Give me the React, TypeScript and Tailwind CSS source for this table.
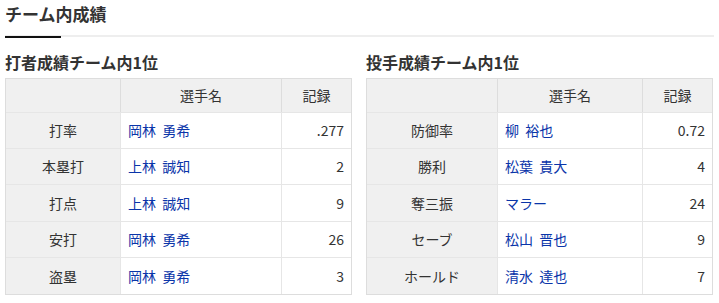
import React from "react";

type Row = { label: string; name: string; value: string };

const batting: Row[] = [
  { label: "打率", name: "岡林 勇希", value: ".277" },
  { label: "本塁打", name: "上林 誠知", value: "2" },
  { label: "打点", name: "上林 誠知", value: "9" },
  { label: "安打", name: "岡林 勇希", value: "26" },
  { label: "盗塁", name: "岡林 勇希", value: "3" },
];

const pitching: Row[] = [
  { label: "防御率", name: "柳 裕也", value: "0.72" },
  { label: "勝利", name: "松葉 貴大", value: "4" },
  { label: "奪三振", name: "マラー", value: "24" },
  { label: "セーブ", name: "松山 晋也", value: "9" },
  { label: "ホールド", name: "清水 達也", value: "7" },
];

const rowHeights = ["h-[36px]", "h-[36px]", "h-[37px]", "h-[36px]", "h-[37px]"];

function StatTable({
  title,
  rows,
  c1,
  c2,
}: {
  title: string;
  rows: Row[];
  c1: string;
  c2: string;
}) {
  return (
    <div className="flex flex-col">
      <h3 className="h-[20px] text-[16px] leading-[20px] font-bold text-[#333333]">{title}</h3>
      <div className="mt-[6px] border border-[#dddddd] text-[14px] text-[#333333]">
        <div className="flex h-[33px] bg-[#f0f0f0]">
          <div className={`${c1} shrink-0`} />
          <div className={`${c2} shrink-0 border-l border-[#dddddd] flex items-center justify-center`}>
            選手名
          </div>
          <div className="flex-1 border-l border-[#dddddd] flex items-center justify-center">記録</div>
        </div>
        {rows.map((r, i) => (
          <div key={r.label} className={`flex ${rowHeights[i]} border-t border-[#e6e6e6]`}>
            <div className={`${c1} shrink-0 bg-[#f0f0f0] flex items-center justify-center`}>{r.label}</div>
            <div
              className={`${c2} shrink-0 border-l border-[#e6e6e6] bg-white flex items-center pl-[7px] text-[#0a35a9] [word-spacing:3px]`}
            >
              {r.name}
            </div>
            <div className="flex-1 border-l border-[#e6e6e6] bg-white flex items-center justify-end pr-[7px]">
              {r.value}
            </div>
          </div>
        ))}
      </div>
    </div>
  );
}

export default function App() {
  return (
    <div
      className="w-[719px] h-[303px] bg-white px-[5px]"
      style={{ fontFamily: '"Noto Sans CJK JP", "Noto Sans", sans-serif' }}
    >
      <h2 className="h-[28px] text-[17px] leading-[28px] font-bold text-[#333333]">チーム内成績</h2>
      <div className="relative mt-[7px] h-[3px]">
        <div className="h-[2px] bg-[#eeeeee]" />
        <div className="absolute left-0 top-[1px] h-[2px] w-[56px] bg-[#111111]" />
      </div>
      <div className="mt-[14px] grid grid-cols-[347px_347px] gap-x-[14px]">
        <StatTable title="打者成績チーム内1位" rows={batting} c1="w-[114px]" c2="w-[161px]" />
        <StatTable title="投手成績チーム内1位" rows={pitching} c1="w-[130px]" c2="w-[145px]" />
      </div>
    </div>
  );
}
